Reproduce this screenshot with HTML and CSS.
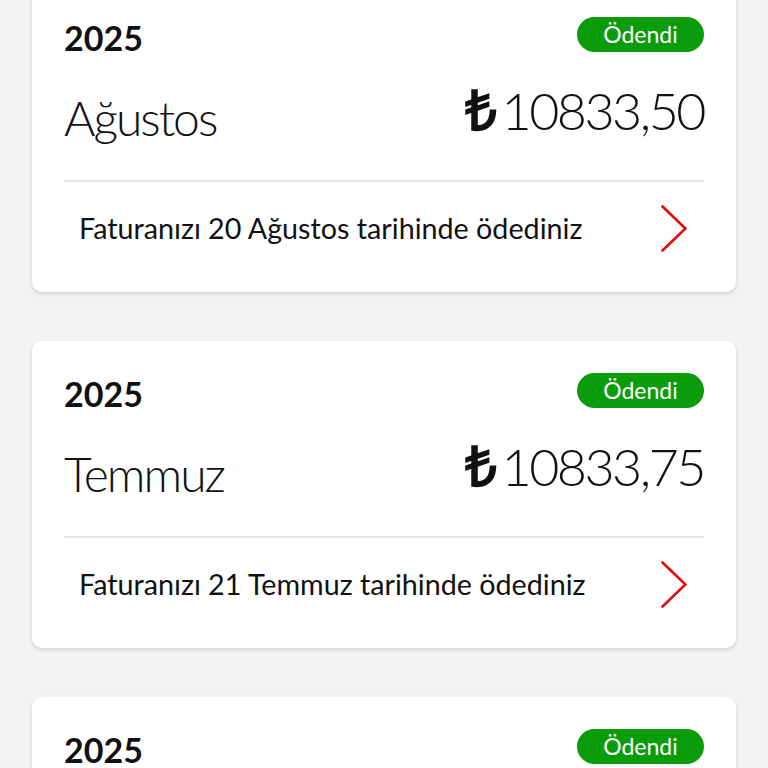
FILE: index.html
```html
<!DOCTYPE html>
<html lang="tr">
<head>
<meta charset="utf-8">
<link rel="stylesheet" href="styles.css">
</head>
<body>
<div class="list">
  <div class="card">
    <div class="top">
      <span class="year">2025</span>
      <span class="badge">Ödendi</span>
    </div>
    <div class="mid">
      <span class="month">Ağustos</span>
      <span class="amount"><span class="lira">₺</span>10833,50</span>
    </div>
    <div class="foot">
      <span class="note">Faturanızı 20 Ağustos tarihinde ödediniz</span>
      <svg class="chev" viewBox="0 0 26 47" width="26" height="47"><path d="M1.5 1.5 L24.5 23.5 L1.5 45.5" fill="none" stroke="#e10a0a" stroke-width="2.6" stroke-linecap="round" stroke-linejoin="miter"/></svg>
    </div>
  </div>
  <div class="card">
    <div class="top">
      <span class="year">2025</span>
      <span class="badge">Ödendi</span>
    </div>
    <div class="mid">
      <span class="month">Temmuz</span>
      <span class="amount"><span class="lira">₺</span>10833,75</span>
    </div>
    <div class="foot">
      <span class="note">Faturanızı 21 Temmuz tarihinde ödediniz</span>
      <svg class="chev" viewBox="0 0 26 47" width="26" height="47"><path d="M1.5 1.5 L24.5 23.5 L1.5 45.5" fill="none" stroke="#e10a0a" stroke-width="2.6" stroke-linecap="round" stroke-linejoin="miter"/></svg>
    </div>
  </div>
  <div class="card">
    <div class="top">
      <span class="year">2025</span>
      <span class="badge">Ödendi</span>
    </div>
    <div class="mid">
      <span class="month">Haziran</span>
      <span class="amount"><span class="lira">₺</span>10833,50</span>
    </div>
    <div class="foot">
      <span class="note">Faturanızı 20 Haziran tarihinde ödediniz</span>
      <svg class="chev" viewBox="0 0 26 47" width="26" height="47"><path d="M1.5 1.5 L24.5 23.5 L1.5 45.5" fill="none" stroke="#e10a0a" stroke-width="2.6" stroke-linecap="round" stroke-linejoin="miter"/></svg>
    </div>
  </div>
</div>
</body>
</html>
```
FILE: styles.css
```css
html, body {
  margin: 0;
  padding: 0;
  background: #f3f3f3;
  font-family: "Lato", "Open Sans", sans-serif;
  color: #111;
  overflow: hidden;
  height: 768px;
}
.list {
  display: flex;
  flex-direction: column;
  gap: 49px;
  padding: 0 32px;
  margin-top: -15px;
}
.card {
  background: #fff;
  border-radius: 10px;
  box-shadow: 0 2px 4px rgba(0,0,0,0.14);
  padding: 32px 32px 0;
  height: 307px;
  box-sizing: border-box;
  flex-shrink: 0;
}
.top {
  display: flex;
  justify-content: space-between;
  align-items: flex-start;
  height: 35px;
}
.year {
  font-size: 34px;
  font-weight: 700;
  line-height: 35px;
  margin-top: 3px;
}
.badge {
  background: #0b9c0b;
  color: #fff;
  font-size: 23px;
  line-height: 35px;
  height: 35px;
  width: 127px;
  text-align: center;
  border-radius: 18px;
}
.mid {
  display: flex;
  justify-content: space-between;
  align-items: flex-start;
  height: 128px;
  border-bottom: 2px solid #e8e8e8;
}
.month {
  font-size: 48px;
  font-weight: 300;
  letter-spacing: -2px;
  line-height: 68px;
  margin-top: 32px;
}
.amount {
  font-size: 52px;
  font-weight: 300;
  letter-spacing: -2.5px;
  line-height: 70px;
  margin-top: 21px;
}
.lira {
  font-family: "Open Sans", sans-serif;
  font-weight: 700;
  font-size: 56px;
  letter-spacing: 0;
  margin-right: 4px;
}
.foot {
  display: flex;
  justify-content: space-between;
  align-items: flex-start;
  height: 110px;
  padding: 0 17px 0 15px;
}
.note {
  font-size: 28.7px;
  font-weight: 400;
  line-height: 40px;
  margin-top: 26px;
}
.chev {
  display: block;
  margin-top: 23px;
}
```
